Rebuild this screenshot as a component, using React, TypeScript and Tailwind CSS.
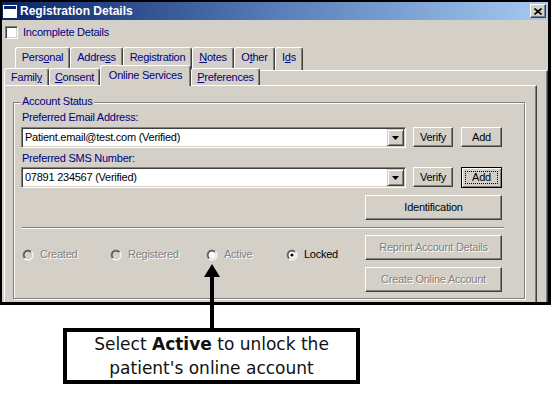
import React from "react";
import clsx from "clsx";

const ui = "font-['Liberation_Sans',Arial,sans-serif] text-[11px] tracking-[-0.25px] leading-[13px]";
const raised =
  "border border-t-white border-l-white border-r-[#404040] border-b-[#404040] shadow-[inset_-1px_-1px_0_#808080] bg-[#d4d0c8]";
const sunken =
  "border border-t-[#808080] border-l-[#808080] border-r-white border-b-white shadow-[inset_1px_1px_0_#404040,inset_-1px_-1px_0_#d4d0c8] p-[1px]";
const grayed = "text-[#808080] [text-shadow:1px_1px_0_#ffffff]";

const Tab = ({ className, children }: { className: string; children: React.ReactNode }) => (
  <div
    className={clsx(
      "relative flex items-center justify-center rounded-t-[3px] border-l border-t border-r border-l-white border-t-white border-r-[#404040] shadow-[inset_-1px_0_0_#808080] bg-[#d4d0c8] text-[#000080] whitespace-nowrap",
      className
    )}
  >
    {children}
  </div>
);

const Button = ({
  className,
  children,
  disabled,
}: {
  className: string;
  children: React.ReactNode;
  disabled?: boolean;
}) => (
  <div className={clsx(raised, "flex items-center justify-center whitespace-nowrap", disabled ? grayed : "text-black", className)}>
    {children}
  </div>
);

const Combo = ({ value }: { value: string }) => (
  <div className={clsx(sunken, "w-[385px] h-[21px] bg-white flex items-center")}>
    <span className="flex-1 pl-[2px] text-black">{value}</span>
    <div className="w-[17px] h-[17px] flex items-center justify-center border border-t-[#d4d0c8] border-l-[#d4d0c8] border-r-[#404040] border-b-[#404040] shadow-[inset_1px_1px_0_#fff,inset_-1px_-1px_0_#808080] bg-[#d4d0c8]">
      <svg width="7" height="4" viewBox="0 0 7 4">
        <polygon points="0,0 7,0 3.5,4" fill="#000" />
      </svg>
    </div>
  </div>
);

const Radio = ({
  label,
  className,
  checked,
  disabled,
  white,
}: {
  label: string;
  className: string;
  checked?: boolean;
  disabled?: boolean;
  white?: boolean;
}) => (
  <div className={clsx("flex items-center gap-[6px]", className)}>
    <svg width="12" height="12" viewBox="0 0 12 12">
      <defs>
        <linearGradient id="rOut" x1="0" y1="0" x2="1" y2="1">
          <stop offset="0.5" stopColor="#808080" />
          <stop offset="0.5" stopColor="#ffffff" />
        </linearGradient>
        <linearGradient id="rIn" x1="0" y1="0" x2="1" y2="1">
          <stop offset="0.5" stopColor="#404040" />
          <stop offset="0.5" stopColor="#d4d0c8" />
        </linearGradient>
      </defs>
      <circle cx="6" cy="6" r="5.5" fill="url(#rOut)" />
      <circle cx="6" cy="6" r="4.5" fill="url(#rIn)" />
      <circle cx="6" cy="6" r="3.5" fill={white || !disabled ? "#ffffff" : "#d4d0c8"} />
      {checked && <circle cx="6" cy="6" r="1.6" fill="#000" />}
    </svg>
    <span className={disabled ? grayed : "text-black"}>{label}</span>
  </div>
);

export default function App() {
  return (
    <div className="relative w-[551px] h-[394px] bg-white overflow-hidden">
      {/* dialog */}
      <div
        className={clsx(
          ui,
          "w-[551px] h-[305px] flex flex-col overflow-hidden bg-[#d4d0c8] border-black border-l-2 border-t-2 border-r-[3px] border-b-[3px]"
        )}
      >
        {/* title bar */}
        <div className="h-[18px] shrink-0 flex items-center bg-linear-to-r from-[#0a246a] via-[#5a7cb8] to-[#a6caf0] pl-[1px] pr-[2px]">
          <svg width="14" height="13" viewBox="0 0 14 13">
            <rect x="0" y="0" width="14" height="13" fill="#ffffff" />
            <rect x="1" y="1" width="12" height="3" fill="#0a246a" />
            <rect x="1" y="4" width="12" height="8" fill="#ffffff" />
          </svg>
          <span className="ml-[3px] flex-1 text-white font-bold text-[12px] tracking-normal">Registration Details</span>
          <div className={clsx(raised, "w-[16px] h-[14px] flex items-center justify-center")}>
            <svg width="8" height="7" viewBox="0 0 8 7">
              <path d="M0.5 0.5 L7.5 6.5 M7.5 0.5 L0.5 6.5" stroke="#000" strokeWidth="1.6" />
            </svg>
          </div>
        </div>

        {/* incomplete details */}
        <div className="mt-[6px] pl-[3px] flex items-center gap-[5px] shrink-0">
          <div className={clsx(sunken, "w-[13px] h-[13px] bg-white")} />
          <span className="text-[#000080]">Incomplete Details</span>
        </div>

        {/* tabs */}
        <div className="mt-[8px] flex-1 min-h-0 flex flex-col">
          <div className="flex h-[23px] pl-[13px] shrink-0">
            <Tab className="w-[55px] h-[23px] pb-[3px]">
              Pers<u>o</u>nal
            </Tab>
            <Tab className="w-[53px] h-[23px] pb-[3px]">
              Addre<u>s</u>s
            </Tab>
            <Tab className="w-[69px] h-[23px] pb-[3px]">Registration</Tab>
            <Tab className="w-[42px] h-[23px] pb-[3px]">
              <u>N</u>otes
            </Tab>
            <Tab className="w-[41px] h-[23px] pb-[3px]">
              O<u>t</u>her
            </Tab>
            <Tab className="w-[28px] h-[23px] pb-[3px]">
              I<u>d</u>s
            </Tab>
          </div>

          <div className="ml-[2px] flex-1 min-h-0 flex flex-col border-t border-r border-t-white border-r-[#404040] shadow-[inset_-1px_0_0_#808080]">
            <div className="relative z-10 -mt-[3px] flex items-end h-[17px] shrink-0">
              <Tab className="w-[45px] h-[17px] pt-[1px]">
                Famil<u>y</u>
              </Tab>
              <Tab className="w-[51px] h-[17px] pt-[1px]">
                <u>C</u>onsent
              </Tab>
              <Tab className="w-[91px] h-[21px] -mb-[1px] pb-[2px]">Online Services</Tab>
              <Tab className="w-[69px] h-[17px] pt-[1px]">
                <u>P</u>references
              </Tab>
            </div>

            <div className="w-[533px] flex-1 border-l border-t border-r border-l-white border-t-white border-r-[#404040] shadow-[inset_-1px_0_0_#808080] pl-[8px] pt-[16px]">
              {/* group box */}
              <div className="relative w-[512px] h-[197px] border border-[#808080] shadow-[inset_1px_1px_0_#fff,1px_1px_0_#fff] pl-[7px] pr-[22px] pt-[8px]">
                <span className="absolute left-[7px] -top-[8px] px-[1px] bg-[#d4d0c8] text-[#000080]">Account Status</span>

                <div className="pl-[1px] text-[#000080]">Preferred Email Address:</div>
                <div className="mt-[3px] flex items-start">
                  <Combo value="Patient.email@test.com (Verified)" />
                  <Button className="ml-[7px] w-[40px] h-[20px]">Verify</Button>
                  <Button className="ml-[8px] w-[41px] h-[20px]">Add</Button>
                </div>

                <div className="mt-[4px] pl-[1px] text-[#000080]">Preferred SMS Number:</div>
                <div className="mt-[2px] flex items-start">
                  <Combo value="07891 234567 (Verified)" />
                  <Button className="ml-[7px] w-[40px] h-[20px]">Verify</Button>
                  <div className="ml-[8px] w-[41px] h-[21px] border border-black bg-[#d4d0c8] shadow-[inset_1px_1px_0_#fff,inset_-1px_-1px_0_#808080] p-[3px] flex">
                    <span className="flex-1 flex items-center justify-center border border-dotted border-black text-black">
                      Add
                    </span>
                  </div>
                </div>

                <div className="mt-[7px] flex justify-end">
                  <Button className="w-[137px] h-[25px]">Identification</Button>
                </div>

                <div className="mt-[7px] ml-[1px] w-[482px] h-0 border-t border-t-[#808080] border-b border-b-white" />

                <div className="mt-[6px] flex">
                  <div className="flex-1 mt-[13px] ml-[1px] flex items-center h-[13px]">
                    <Radio label="Created" className="w-[88px]" disabled />
                    <Radio label="Registered" className="w-[96px]" disabled />
                    <Radio label="Active" className="w-[80px]" disabled white />
                    <Radio label="Locked" className="w-[70px]" checked />
                  </div>
                  <div className="flex flex-col gap-[7px]">
                    <Button className="w-[137px] h-[25px]" disabled>
                      Reprint Account Details
                    </Button>
                    <Button className="w-[137px] h-[25px]" disabled>
                      Create Online Account
                    </Button>
                  </div>
                </div>
              </div>
            </div>
          </div>
        </div>
      </div>

      {/* callout */}
      <div className="mt-[23px] ml-[63px] w-[297px] h-[56px] border-4 border-black flex flex-col items-center justify-center font-['DejaVu_Sans',sans-serif] text-[17px] leading-[24px] text-[#111] whitespace-nowrap">
        <div>
          Select <b>Active</b> to unlock the
        </div>
        <div>patient's online account</div>
      </div>

      {/* arrow pointing at Active */}
      <svg className="absolute left-[202px] top-[262px]" width="20" height="68" viewBox="0 0 20 68">
        <polygon points="10,2 2,15 18,15" fill="#000" />
        <rect x="8" y="14" width="4" height="53" fill="#000" />
      </svg>
    </div>
  );
}
